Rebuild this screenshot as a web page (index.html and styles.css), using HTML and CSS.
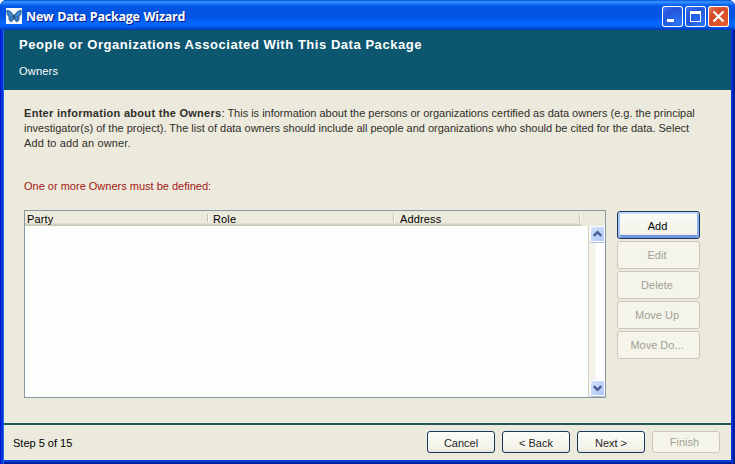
FILE: index.html
```
<!DOCTYPE html>
<html lang="en">
<head>
<meta charset="utf-8">
<title>New Data Package Wizard</title>
<link rel="stylesheet" href="styles.css">
</head>
<body>
<div class="window">
  <header class="titlebar">
    <svg class="app-icon" viewBox="0 0 16 16"><path fill="#f4f8fc" d="M0 0h16v16H0z"/><path fill="#2f76be" stroke="#2a4e78" stroke-width=".6" d="M7.500 7.500C6 4 3 2 .6 2.300c0 3 .9 5.700 2.600 6.700-1 1.500 0 4.500 2 4.800 1.500-.3 2-2.300 2.800-4.300.8 2 1.300 4 2.800 4.300 2-.3 3-3.300 2-4.800 1.700-1 2.600-3.700 2.600-6.700C13 2 10 4 8.500 7.500z"/><path fill="#4590d8" d="M2 3.800c2 .7 3.500 2.500 4.500 4.700L3.500 7.500zM14 3.800c-2 .7-3.500 2.500-4.500 4.700l3-1zM4.500 10l2-.5-1 2.500zM11.500 10l-2-.5 1 2.500z"/><path stroke="#273448" d="M8 6.500v5" fill="none"/></svg>
    <h1 class="caption">New Data Package Wizard</h1>
    <div class="controls">
      <span class="control"><svg viewBox="0 0 21 21"><path fill="#fff" d="M5 13h7v3H5z"/></svg></span>
      <span class="control"><svg viewBox="0 0 21 21"><path fill="#fff" fill-rule="evenodd" d="M5 5h11v11H5zM6 8v7h9V8z"/></svg></span>
      <span class="control close"><svg viewBox="0 0 21 21"><path stroke="#fff" stroke-width="2.200" d="m5.500 5.500 10 10m0-10-10 10"/></svg></span>
    </div>
  </header>
  <main class="client">
    <section class="banner">
      <h2 class="heading">People or Organizations Associated With This Data Package</h2>
      <p class="subheading">Owners</p>
    </section>
    <section class="page">
      <p class="intro"><span class="line first"><b>Enter information about the Owners</b>: This is information about the persons or organizations certified as data owners (e.g. the principal</span> <span class="line">investigator(s) of the project). The list of data owners should include all people and organizations who should be cited for the data. Select</span> <span class="line last">Add to add an owner.</span></p>
      <p class="warning">One or more Owners must be defined:</p>
      <div class="editor">
        <div class="table">
          <div class="columns"><span class="column">Party</span><span class="column">Role</span><span class="column">Address</span></div>
          <div class="rows">
            <div class="scrollbar">
              <span class="arrow"><svg viewBox="0 0 13 15"><path d="m2.500 9.500 4-4 4 4"/></svg></span>
              <span class="arrow"><svg viewBox="0 0 13 15"><path d="m2.500 5.500 4 4 4-4"/></svg></span>
            </div>
          </div>
        </div>
        <div class="actions">
          <button class="button focused">Add</button>
          <button class="button" disabled>Edit</button>
          <button class="button" disabled>Delete</button>
          <button class="button" disabled>Move Up</button>
          <button class="button" disabled>Move Do...</button>
        </div>
      </div>
    </section>
    <footer class="footer">
      <span class="step">Step 5 of 15</span>
      <button class="button">Cancel</button>
      <button class="button">&lt; Back</button>
      <button class="button">Next &gt;</button>
      <button class="button" disabled>Finish</button>
    </footer>
  </main>
</div>
</body>
</html>
```
FILE: styles.css
```
* { box-sizing: border-box; }
body {
  margin: 0;
  background: #fff;
  font: 11px/15px "Liberation Sans", Arial, sans-serif;
  color: #302f29;
}
h1, h2, p { margin: 0; white-space: nowrap; }
.window {
  width: 735px;
  height: 464px;
  display: flex;
  flex-direction: column;
  padding: 0 4px 4px;
  border-radius: 7px 7px 0 0;
  background: #0831d9;
  box-shadow: inset 1px 0 #0019cf, inset 3px 0 #0831d9, inset 4px 0 #166aee, inset -2px 0 #001da0, inset -3px 0 #0333ca, inset 0 -2px #001da0, inset 0 -4px #0540dc;
}
.titlebar {
  height: 30px;
  flex: none;
  display: flex;
  align-items: center;
  margin: 0 -4px;
  padding: 3px 6px 0;
  border-radius: 7px 7px 0 0;
  background: linear-gradient(#0054d9 0, #3d95ff 2px, #1672f5 4px, #0559e8 6px, #0253e1 10px, #0254e5 17px, #0566fd 22px, #0566fb 25px, #025bef 27px, #0042cc 29px, #0038bb 30px);
}
.app-icon { width: 16px; height: 16px; margin-top: -2px; }
.caption {
  flex: 1;
  margin-left: 4px;
  font: bold 12.5px/20px "Open Sans", sans-serif;
  letter-spacing: -.25px;
  word-spacing: .8px;
  color: #fff;
  text-shadow: 1px 1px #0a1883;
}
.controls { display: flex; gap: 2px; }
.control {
  width: 21px;
  height: 21px;
  border-radius: 3px;
  box-shadow: inset 0 0 0 1px #fff;
  background: radial-gradient(circle at 75% 80%, #2b74f4, #2456dc 60%, #4c7cf0);
}
.control.close { background: radial-gradient(circle at 75% 80%, #e65a2c, #d44d28 60%, #e88367); }
.control svg { display: block; width: 21px; height: 21px; }
.client { flex: 1; display: flex; flex-direction: column; background: #eceadd; }
.banner { height: 60px; padding: 7px 15px; background: #0d5670; color: #fff; }
.heading { font-size: 13px; line-height: 15px; letter-spacing: .54px; }
.subheading { margin: 12px 0 0; letter-spacing: .2px; }
.page { flex: 1; padding: 16px 31px 0 20px; }
.line { display: block; }
.line.first { letter-spacing: -.01px; }
.line b { letter-spacing: .29px; }
.line.last { letter-spacing: .13px; }
.warning { margin-top: 28px; color: #a31713; }
.editor { display: flex; margin-top: 16px; gap: 11px; }
.table {
  width: 582px;
  height: 188px;
  display: flex;
  flex-direction: column;
  border: 1px solid #8798a5;
}
.columns { height: 15px; flex: none; display: flex; margin-right: 24px; background: linear-gradient(#eceadd 12px, #d8d4c6 13px, #c5c1b2 15px); color: #000; letter-spacing: .15px; }
.column {
  width: 186px;
  flex: none;
  padding-left: 2px;
  line-height: 17px;
  background: linear-gradient(#c5c1b3, #c5c1b3) 182px 3px / 1px 8px no-repeat, linear-gradient(#fff, #fff) 183px 3px / 1px 8px no-repeat;
}
.column:last-child { width: 184px; padding-left: 3px; }
.rows { flex: 1; display: flex; justify-content: flex-end; background: #fdfffc; }
.scrollbar {
  width: 17px;
  display: flex;
  flex-direction: column;
  justify-content: space-between;
  padding: 0 0 1px 1px;
  border-left: 1px solid #d3d1c6;
  background: linear-gradient(90deg, #f4f2ea 6px, #fdfefd 7px);
}
.arrow { width: 15px; height: 16px; border: 1px solid #fff; border-radius: 2px; background: linear-gradient(135deg, #d5e2ff, #afc5f5); box-shadow: 0 1px #a9bddf; }
.arrow svg { display: block; width: 13px; height: 14px; fill: none; stroke: #435f93; stroke-width: 2.500; }
.actions { display: grid; width: 83px; gap: 2px; align-content: start; padding-top: 1px; }
.button {
  height: 28px;
  padding: 2px 0 0;
  border: 1px solid #173961;
  border-radius: 3px;
  background: linear-gradient(#fbfbf8, #f4f4eb 80%, #e6e4db);
  font: inherit;
  color: #25251f;
}
.button.focused { padding-right: 2px; border-color: #17365c; color: #000; box-shadow: inset 0 2px #c4daff, inset 2px 0 #a9c5f6, inset -2px 0 #8caeea, inset 0 -3px #6f95df; }
.button:disabled { padding: 0 3px 0 0; border-color: #cbc7ba; background: #f4f4eb; color: #a2a094; }
.footer {
  height: 37px;
  flex: none;
  display: grid;
  grid-template-columns: 1fr repeat(4, 68px);
  column-gap: 7px;
  align-items: start;
  padding: 6px 11px 0 9px;
  border-top: 2px solid #24555b;
}
.footer .button { height: 22px; }
.step { color: #000; line-height: 24px; }
```
